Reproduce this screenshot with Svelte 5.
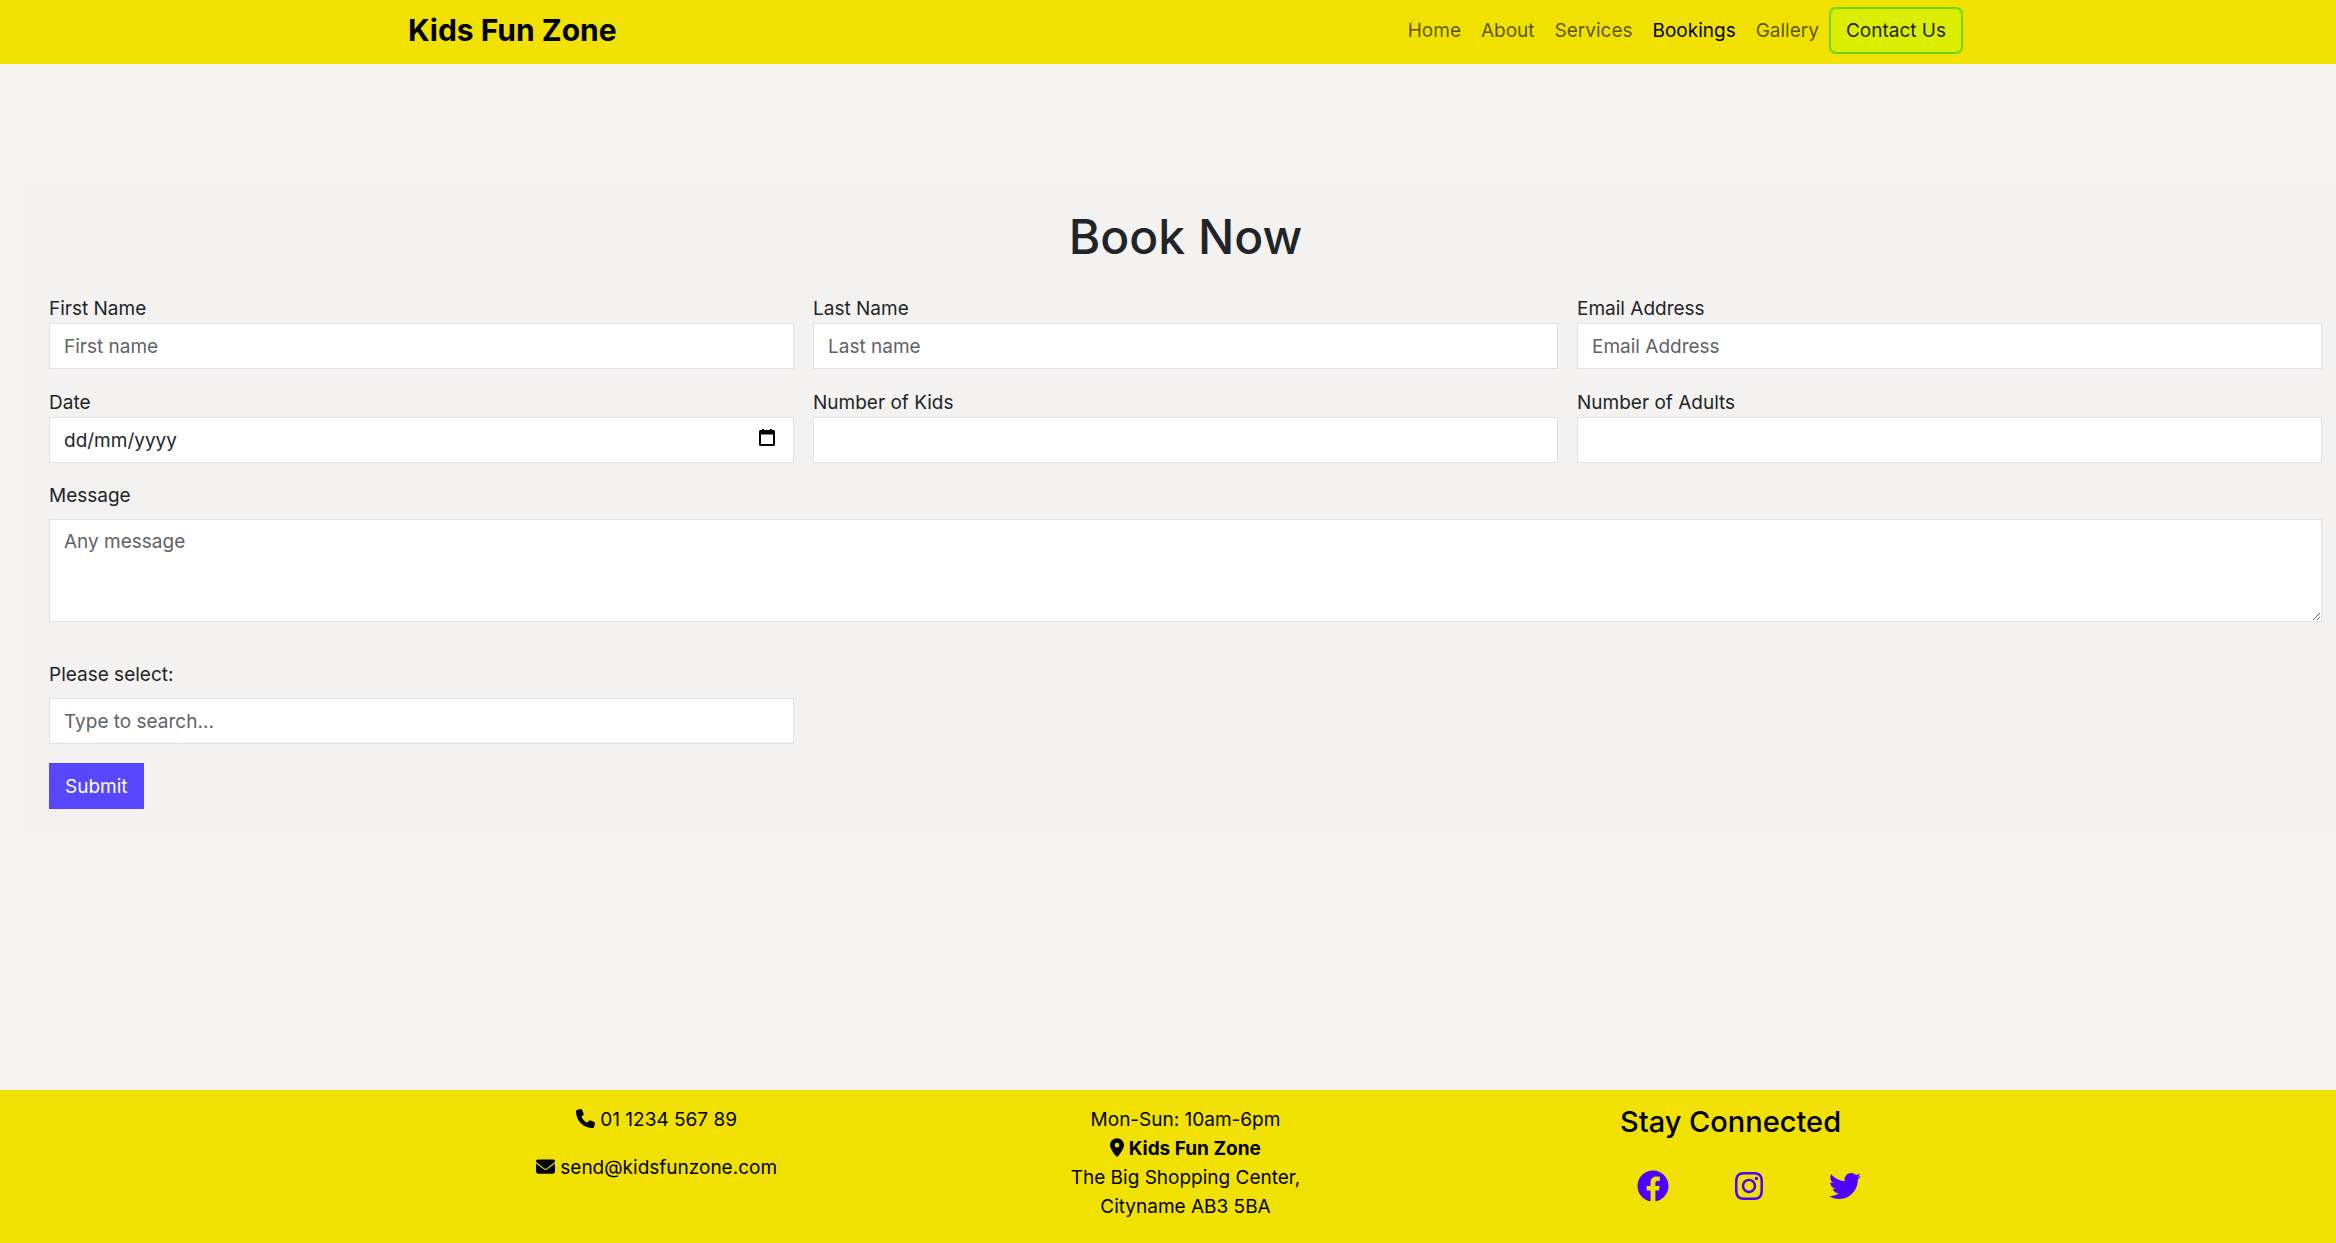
<script>
  const links = ['Home', 'About', 'Services', 'Bookings', 'Gallery'];
  const fields = [
    { id: 'first', label: 'First Name', type: 'text', hint: 'First name' },
    { id: 'last', label: 'Last Name', type: 'text', hint: 'Last name' },
    { id: 'email', label: 'Email Address', type: 'email', hint: 'Email Address' },
    { id: 'date', label: 'Date', type: 'text', hint: 'dd/mm/yyyy' },
    { id: 'kids', label: 'Number of Kids', type: 'number', hint: '' },
    { id: 'adults', label: 'Number of Adults', type: 'number', hint: '' }
  ];
  const social = [
    {
      name: 'Facebook',
      box: '0 0 512 512',
      d: 'M504 256C504 119 393 8 256 8S8 119 8 256c0 123.78 90.69 226.38 209.25 245V327.69h-63V256h63v-54.64c0-62.15 37-96.48 93.67-96.48 27.14 0 55.52 4.84 55.52 4.84v61h-31.28c-30.8 0-40.41 19.12-40.41 38.73V256h68.78l-11 71.69h-57.78V501C413.31 482.38 504 379.78 504 256z'
    },
    {
      name: 'Instagram',
      box: '-32 0 512 512',
      d: 'M224.1 141c-63.6 0-114.9 51.3-114.9 114.9s51.3 114.9 114.9 114.9S339 319.5 339 255.9 287.7 141 224.1 141zm0 189.6c-41.1 0-74.7-33.5-74.7-74.7s33.5-74.7 74.7-74.7 74.7 33.5 74.7 74.7-33.6 74.7-74.7 74.7zm146.4-194.3c0 14.9-12 26.8-26.8 26.8-14.9 0-26.8-12-26.8-26.8s12-26.8 26.8-26.8 26.8 12 26.8 26.8zm76.1 27.2c-1.7-35.9-9.9-67.7-36.2-93.9-26.2-26.2-58-34.4-93.9-36.2-37-2.1-147.9-2.1-184.9 0-35.8 1.7-67.6 9.9-93.9 36.1s-34.4 58-36.2 93.9c-2.1 37-2.1 147.9 0 184.9 1.7 35.9 9.9 67.7 36.2 93.9s58 34.4 93.9 36.2c37 2.1 147.9 2.1 184.9 0 35.9-1.7 67.7-9.9 93.9-36.2 26.2-26.2 34.4-58 36.2-93.9 2.1-37 2.1-147.8 0-184.8zM398.8 388c-7.8 19.6-22.9 34.7-42.6 42.6-29.5 11.7-99.5 9-132.1 9s-102.7 2.6-132.1-9c-19.6-7.8-34.7-22.9-42.6-42.6-11.7-29.5-9-99.5-9-132.1s-2.6-102.7 9-132.1c7.8-19.6 22.9-34.7 42.6-42.6 29.5-11.7 99.5-9 132.1-9s102.7-2.6 132.1 9c19.6 7.8 34.7 22.9 42.6 42.6 11.7 29.5 9 99.5 9 132.1s2.7 102.7-9 132.1z'
    },
    {
      name: 'Twitter',
      box: '0 0 512 512',
      d: 'M459.37 151.716c.325 4.548.325 9.097.325 13.645 0 138.72-105.583 298.558-298.558 298.558-59.452 0-114.68-17.219-161.137-47.106 8.447.974 16.568 1.299 25.34 1.299 49.055 0 94.213-16.568 130.274-44.832-46.132-.975-84.792-31.188-98.112-72.772 6.498.974 12.995 1.624 19.818 1.624 9.421 0 18.843-1.3 27.614-3.573-48.081-9.747-84.143-51.98-84.143-102.985v-1.299c13.969 7.797 30.214 12.67 47.431 13.319-28.264-18.843-46.781-51.005-46.781-87.391 0-19.492 5.197-37.36 14.294-52.954 51.655 63.675 129.3 105.258 216.365 109.807-1.624-7.797-2.599-15.918-2.599-24.04 0-57.828 46.782-104.934 104.934-104.934 30.213 0 57.502 12.67 76.67 33.137 23.715-4.548 46.456-13.32 66.599-25.34-7.798 24.366-24.366 44.833-46.132 57.827 21.117-2.273 41.584-8.122 60.426-16.243-14.292 20.791-32.161 39.308-52.628 54.253z'
    }
  ];
</script>

<div class="page">
  <header>
    <div class="bar">
      <a class="brand" href="#home">Kids Fun Zone</a>
      <nav>
        {#each links as l}
          <a href="#{l.toLowerCase()}" class:active={l === 'Bookings'}>{l}</a>
        {/each}
        <a class="contact" href="#contact">Contact Us</a>
      </nav>
    </div>
  </header>

  <main>
    <form onsubmit={(e) => e.preventDefault()}>
      <h1>Book Now</h1>
      <div class="grid">
        {#each fields as f}
          <div class="field">
            <label for={f.id}>{f.label}</label>
            <div class="control">
              <input id={f.id} type={f.type} placeholder={f.hint} class:date={f.id === 'date'} />
              {#if f.id === 'date'}
                <button type="button" class="picker" aria-label="Choose a date">
                  <svg viewBox="0 0 16 17">
                    <path d="M3 0h2v1h6V0h2v1h1.500q1.500 0 1.500 1.500v13q0 1.500-1.500 1.500h-13Q0 17 0 15.500v-13Q0 1 1.500 1H3zM2 5.500v9.500h12V5.500z" fill-rule="evenodd" />
                  </svg>
                </button>
              {/if}
            </div>
          </div>
        {/each}
      </div>
      <div class="field spaced message">
        <label for="message">Message</label>
        <textarea id="message" placeholder="Any message"></textarea>
      </div>
      <div class="grid">
        <div class="field spaced">
          <label for="choice">Please select:</label>
          <input id="choice" type="text" placeholder="Type to search..." />
        </div>
      </div>
      <button class="submit" type="submit">Submit</button>
    </form>
  </main>

  <footer>
    <div class="columns">
      <div class="contacts">
        <p>
          <svg class="glyph" viewBox="0 0 512 512"><path d="M164.900 24.600c-7.700-18.600-28-28.500-47.400-23.200l-88 24C12.100 30.200 0 46 0 64c0 247.400 200.600 448 448 448 18 0 33.800-12.100 38.600-29.500l24-88c5.300-19.400-4.600-39.700-23.200-47.400l-96-40c-16.300-6.800-35.200-2.100-46.300 11.600L304.700 368C234.300 334.700 177.300 277.700 144 207.300L193.300 167c13.700-11.200 18.400-30 11.600-46.300l-40-96z" /></svg>
          01 1234 567 89
        </p>
        <p>
          <svg class="glyph" viewBox="0 0 512 512"><path d="M48 64C21.500 64 0 85.500 0 112c0 15.100 7.100 29.300 19.200 38.400l217.600 163.200c11.400 8.500 27 8.500 38.400 0l217.600-163.200c12.100-9.100 19.200-23.300 19.200-38.400 0-26.500-21.500-48-48-48zM0 176v208c0 35.300 28.700 64 64 64h384c35.300 0 64-28.700 64-64V176L294.400 339.200c-22.800 17.100-54 17.100-76.800 0z" /></svg>
          send@kidsfunzone.com
        </p>
      </div>
      <address>
        Mon-Sun: 10am-6pm<br />
        <strong><svg class="glyph pin" viewBox="0 0 384 512"><path d="M215.700 499.200C267 435 384 279.400 384 192 384 86 298 0 192 0S0 86 0 192c0 87.400 117 243 168.300 307.200 12.300 15.300 35.100 15.300 47.400 0zM192 128a64 64 0 1 1 0 128 64 64 0 1 1 0-128z" /></svg> Kids Fun Zone</strong><br />
        The Big Shopping Center,<br />
        Cityname AB3 5BA
      </address>
      <div class="stay">
        <h2>Stay Connected</h2>
        <ul>
          {#each social as s}
            <li>
              <a href="#{s.name.toLowerCase()}" aria-label={s.name}>
                <svg viewBox={s.box}><path d={s.d} /></svg>
              </a>
            </li>
          {/each}
        </ul>
      </div>
    </div>
  </footer>
</div>

<style>
  :global(body) {
    margin: 0;
    background: #f4f3f1;
  }
  .page,
  .page * {
    box-sizing: border-box;
  }
  .page {
    min-height: 100vh;
    display: flex;
    flex-direction: column;
    font: 19px/29px Inter, 'Liberation Sans', sans-serif;
    color: #212529;
  }
  a {
    text-decoration: none;
  }
  header,
  footer {
    background: #f1e100;
    padding-left: 35px;
  }
  .bar {
    display: flex;
    align-items: center;
    justify-content: space-between;
    max-width: 1555px;
    min-height: 64px;
    margin: 0 auto;
    padding-bottom: 4px;
  }
  .brand {
    font-size: 30px;
    font-weight: 700;
    color: #000;
  }
  nav {
    display: flex;
    align-items: center;
  }
  nav a {
    padding: 8px 10px;
    color: rgba(0, 0, 0, 0.65);
  }
  nav a.active {
    color: #000;
  }
  nav a.contact {
    padding: 7px 15px;
    border: 2px solid #6ad41c;
    border-radius: 7px;
    background: #dcee00;
    color: #212529;
  }
  main {
    flex: 1;
    padding: 120px 0 0 24px;
  }
  form {
    padding: 24px 14px 24px 25px;
    background: #f3f2f0;
  }
  h1 {
    margin: 0 0 28px;
    font-size: 48px;
    line-height: 58px;
    font-weight: 500;
    text-align: center;
  }
  .grid {
    display: grid;
    grid-template-columns: repeat(3, 1fr);
    gap: 19px;
  }
  .field {
    display: flex;
    flex-direction: column;
  }
  .spaced {
    gap: 9px;
  }
  .message {
    margin: 18px 0 38px;
  }
  .control {
    position: relative;
  }
  input,
  textarea {
    display: block;
    width: 100%;
    height: 46px;
    margin: 0;
    padding: 7px 14px;
    border: 1px solid #dee2e6;
    border-radius: 0;
    background: #fff;
    color: #212529;
    font: inherit;
  }
  textarea {
    height: 103px;
    resize: vertical;
  }
  ::placeholder {
    color: #5f6266;
    opacity: 1;
  }
  .date::placeholder {
    color: #212529;
  }
  .picker {
    position: absolute;
    right: 19px;
    top: 12px;
    width: 16px;
    height: 17px;
    padding: 0;
    border: 0;
    background: none;
  }
  .picker svg {
    display: block;
  }
  .submit {
    display: block;
    height: 46px;
    margin-top: 19px;
    padding: 0 16px;
    border: 0;
    background: #5847ff;
    color: #fff;
    font: inherit;
  }
  footer {
    color: #000;
  }
  .columns {
    display: grid;
    grid-template-columns: repeat(3, 1fr);
    max-width: 1587px;
    margin: 0 auto;
    padding: 15px 0 22px;
    text-align: center;
  }
  p {
    margin: 0 0 19px;
  }
  address {
    font-style: normal;
  }
  strong {
    font-weight: 700;
  }
  .glyph {
    width: 19px;
    height: 19px;
    vertical-align: -2px;
  }
  .pin {
    width: 14px;
  }
  .stay {
    padding-left: 32px;
  }
  h2 {
    margin: 0 0 32px;
    font-size: 29px;
    line-height: 33px;
    font-weight: 500;
  }
  ul {
    display: flex;
    justify-content: center;
    margin: 0;
    padding: 0 0 0 36px;
    list-style: none;
  }
  li {
    width: 96px;
  }
  li a {
    display: inline-block;
  }
  li svg {
    display: block;
    width: 32px;
    height: 32px;
    fill: #4d00ff;
  }
</style>
